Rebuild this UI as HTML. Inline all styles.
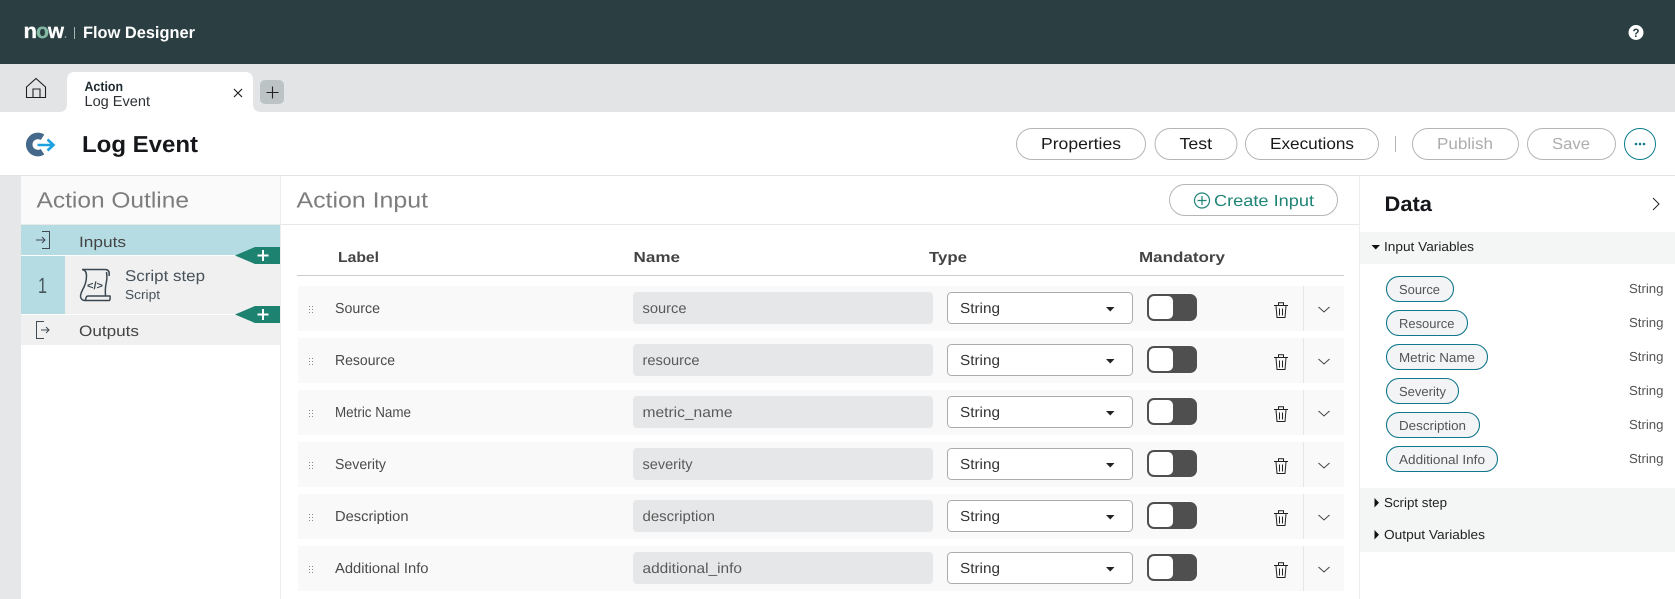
<!DOCTYPE html>
<html lang="en"><head><meta charset="utf-8"><title>Flow Designer</title>
<style>
html,body{margin:0;padding:0;background:#fff;width:1675px;height:599px;overflow:hidden}
svg{display:block}
text{font-family:"Liberation Sans",sans-serif;text-rendering:geometricPrecision;white-space:pre}
.b{font-weight:700}
.rl{font-size:14.5px;fill:#4a4a4a}
.nm{font-size:14.5px;fill:#5a5a5a}
.st{font-size:14.5px;fill:#333}
.pl{font-size:13px;fill:#555}
.ty{font-size:13px;fill:#555}
.hd{font-size:14.5px;font-weight:700;fill:#444}
.btn{font-size:16px;fill:#1a1a1a}
.ds{font-size:16px;fill:#adadad}
.sec{font-size:13px;fill:#222}
</style></head><body>
<svg xmlns="http://www.w3.org/2000/svg" width="1675" height="599" viewBox="0 0 1675 599">
<defs>
<g id="row">
<rect x="298" y="286" width="1046" height="45" fill="#f9f9f9"/>
<g fill="#888"><rect x="309" y="306" width="1" height="1"/><rect x="312" y="306" width="1" height="1"/><rect x="309" y="309" width="1" height="1"/><rect x="312" y="309" width="1" height="1"/><rect x="309" y="312" width="1" height="1"/><rect x="312" y="312" width="1" height="1"/></g>
<rect x="633" y="292" width="300" height="32" rx="4" fill="#e6e7e8"/>
<rect x="947.5" y="292.5" width="185" height="31" rx="4" fill="#fff" stroke="#ababab"/>
<path d="M1106 307h8.500l-4.250 4.500z" fill="#222"/>
<rect x="1147" y="294" width="50" height="27" rx="7" fill="#4f4f4f"/>
<rect x="1149" y="296" width="24" height="23" rx="5" fill="#fff"/>
<g fill="none" stroke="#222" stroke-width="1"><path d="M1274 305.500h14M1278.500 305v-2.300h5v2.300M1276 306l1 11.500h8l1-11.500M1279.500 308.500v7M1282.500 308.500v7"/></g>
<rect x="1303" y="286" width="1" height="45" fill="#e6e6e6"/>
<path d="M1318.500 307l5.500 5 5.500-5" fill="none" stroke="#444" stroke-width="1"/>
</g>
</defs>

<rect width="1675" height="64" fill="#2b3f43"/>
<text x="23.500" y="38" font-size="21" class="b" fill="#fff" stroke="#fff" stroke-width=".3" textLength="13.500" lengthAdjust="spacingAndGlyphs">n</text>
<text x="36" y="38" font-size="21" class="b" fill="#85b8a3" stroke="#85b8a3" stroke-width=".3" textLength="13" lengthAdjust="spacingAndGlyphs">o</text>
<text x="48" y="38" font-size="21" class="b" fill="#fff" stroke="#fff" stroke-width=".3" textLength="16" lengthAdjust="spacingAndGlyphs">w</text>
<circle cx="65.500" cy="37" r=".8" fill="#bbb"/>
<rect x="74" y="27" width="1" height="12" fill="#a9b2b4"/>
<text x="83" y="38" font-size="16.500" class="b" fill="#fff" textLength="112" lengthAdjust="spacingAndGlyphs">Flow Designer</text>
<circle cx="1636" cy="32.500" r="7.500" fill="#fff"/>
<text x="1632.500" y="37" font-size="12" class="b" fill="#2b3f43" textLength="7" lengthAdjust="spacingAndGlyphs">?</text>

<rect y="64" width="1675" height="48" fill="#e3e4e6"/>
<path d="M59 112q8 0 8-8V80q0-8 8-8h170q8 0 8 8v24q0 8 8 8z" fill="#fff"/>
<path d="M26.500 87L36 78.500 45.500 87v10.500h-19zM33 97.500v-8.500h7v8.500" fill="none" stroke="#222" stroke-width="1.100"/>
<text x="84.500" y="91" font-size="13.500" class="b" fill="#1f2a30" textLength="38.500" lengthAdjust="spacingAndGlyphs">Action</text>
<text x="84.500" y="106" font-size="14.500" fill="#2b2f33" textLength="65.500" lengthAdjust="spacingAndGlyphs">Log Event</text>
<path d="M234 89l8 8M242 89l-8 8" stroke="#222" stroke-width="1.200"/>
<rect x="260" y="80" width="24" height="24" rx="5" fill="#bcc3c5"/>
<path d="M272.500 86.500v12M266.500 92.500h12" stroke="#222" stroke-width="1.100"/>

<path d="M42.500 137.300A8.600 8.600 0 1 0 42.500 151.700" fill="none" stroke="#45698a" stroke-width="6.500"/>
<path d="M37.500 145h15M47.500 139.500l6 5.500-6 5.500" fill="none" stroke="#1da1e0" stroke-width="2.600"/>
<text x="82" y="152" font-size="23" class="b" fill="#16171a" textLength="116" lengthAdjust="spacingAndGlyphs">Log Event</text>

<g fill="#fff" stroke="#b5b5b5">
<rect x="1016.500" y="128.500" width="129" height="31" rx="15.500"/>
<rect x="1155" y="128.500" width="82" height="31" rx="15.500"/>
<rect x="1245.500" y="128.500" width="133" height="31" rx="15.500"/>
<rect x="1412.500" y="128.500" width="106" height="31" rx="15.500"/>
<rect x="1527.500" y="128.500" width="88" height="31" rx="15.500"/>
</g>
<text x="1041" y="149" class="btn" textLength="80" lengthAdjust="spacingAndGlyphs">Properties</text>
<text x="1179.500" y="149" class="btn" textLength="32.500" lengthAdjust="spacingAndGlyphs">Test</text>
<text x="1270" y="149" class="btn" textLength="84" lengthAdjust="spacingAndGlyphs">Executions</text>
<rect x="1395" y="136" width="1" height="16" fill="#b5b5b5"/>
<text x="1437" y="149" class="ds" textLength="56" lengthAdjust="spacingAndGlyphs">Publish</text>
<text x="1552" y="149" class="ds" textLength="38" lengthAdjust="spacingAndGlyphs">Save</text>
<circle cx="1640" cy="144" r="15.500" fill="#fff" stroke="#0e7a8c"/>
<g fill="#0e7a8c"><circle cx="1636" cy="144" r="1.300"/><circle cx="1640" cy="144" r="1.300"/><circle cx="1644" cy="144" r="1.300"/></g>

<rect y="175" width="1675" height="1" fill="#e3e3e3"/>
<rect y="176" width="21" height="423" fill="#e6e7e8"/>
<rect x="21" y="176" width="259" height="48" fill="#fafafa"/>
<rect x="280" y="176" width="1" height="423" fill="#eee"/>
<rect x="21" y="224" width="260" height="1" fill="#e8e8e8"/>
<text x="36.500" y="207.500" font-size="22" fill="#7d7d7d" textLength="152.500" lengthAdjust="spacingAndGlyphs">Action Outline</text>
<rect x="21" y="225" width="259" height="30" fill="#b5dce3"/>
<rect x="21" y="256" width="44" height="58" fill="#b5dce3"/>
<rect x="65" y="256" width="215" height="58" fill="#f0f0f0"/>
<rect x="21" y="315" width="259" height="30" fill="#f0f0f0"/>
<path d="M42 231.500h7.500v17H42M36 240h9M42 237l3 3-3 3" fill="none" stroke="#3f4a52" stroke-width="1"/>
<path d="M44 321.500h-7.500v17H44M41 330h8M46 327l3 3-3 3" fill="none" stroke="#3f4a52" stroke-width="1"/>
<text x="79" y="247" font-size="15" fill="#444" textLength="47" lengthAdjust="spacingAndGlyphs">Inputs</text>
<text x="79" y="336" font-size="15" fill="#444" textLength="60" lengthAdjust="spacingAndGlyphs">Outputs</text>
<text x="38" y="293" font-size="22" fill="#45565c" textLength="9" lengthAdjust="spacingAndGlyphs">1</text>
<path d="M82 269.500H105q4 0 4.300 4l-.3 2.500M82 269.500q4.500 .5 4.500 6.500 0 7-4 14-3 6-1.500 8 1 2.500 4 2.500h24q1.500 0 1-4.500H88q-2 0-2.500 4M106.500 272q1 6-.5 12-1 5-.5 11.500" fill="none" stroke="#3a4750" stroke-width="1.500" stroke-linejoin="round"/>
<text x="87" y="289" font-size="10.500" class="b" fill="#3a4750" textLength="16" lengthAdjust="spacingAndGlyphs">&lt;/&gt;</text>
<text x="125" y="281" font-size="15.500" fill="#48525a" textLength="80" lengthAdjust="spacingAndGlyphs">Script step</text>
<text x="125" y="299" font-size="13" fill="#48525a" textLength="35" lengthAdjust="spacingAndGlyphs">Script</text>
<path d="M235 255.500l20-8.500h25v17h-25z" fill="#1e8270"/>
<path d="M263 250v11M257.500 255.500h11" stroke="#fff" stroke-width="2"/>
<path d="M235 314.500l20-8.500h25v17h-25z" fill="#1e8270"/>
<path d="M263 309v11M257.500 314.500h11" stroke="#fff" stroke-width="2"/>

<rect x="281" y="224" width="1078" height="1" fill="#e8e8e8"/>
<text x="296.500" y="207.500" font-size="22" fill="#7d7d7d" textLength="131.500" lengthAdjust="spacingAndGlyphs">Action Input</text>
<rect x="1169.500" y="184.500" width="168" height="31" rx="15.500" fill="#fff" stroke="#b5b5b5"/>
<circle cx="1202" cy="200.500" r="7.500" fill="none" stroke="#1f8476" stroke-width="1.200"/>
<path d="M1202 196v9M1197.500 200.500h9" stroke="#1f8476" stroke-width="1.200"/>
<text x="1214" y="206" font-size="16" fill="#1f8476" textLength="100" lengthAdjust="spacingAndGlyphs">Create Input</text>

<text x="338" y="262" class="hd" textLength="41" lengthAdjust="spacingAndGlyphs">Label</text>
<text x="633.500" y="262" class="hd" textLength="46.500" lengthAdjust="spacingAndGlyphs">Name</text>
<text x="929" y="262" class="hd" textLength="38" lengthAdjust="spacingAndGlyphs">Type</text>
<text x="1139" y="262" class="hd" textLength="86" lengthAdjust="spacingAndGlyphs">Mandatory</text>
<rect x="297" y="275" width="1047" height="1" fill="#ccc"/>

<use href="#row"/>
<use href="#row" y="52"/>
<use href="#row" y="104"/>
<use href="#row" y="156"/>
<use href="#row" y="208"/>
<use href="#row" y="260"/>

<text x="335" y="313" class="rl" textLength="45" lengthAdjust="spacingAndGlyphs">Source</text>
<text x="335" y="365" class="rl" textLength="60" lengthAdjust="spacingAndGlyphs">Resource</text>
<text x="335" y="417" class="rl" textLength="76" lengthAdjust="spacingAndGlyphs">Metric Name</text>
<text x="335" y="469" class="rl" textLength="51" lengthAdjust="spacingAndGlyphs">Severity</text>
<text x="335" y="521" class="rl" textLength="73.500" lengthAdjust="spacingAndGlyphs">Description</text>
<text x="335" y="573" class="rl" textLength="93.500" lengthAdjust="spacingAndGlyphs">Additional Info</text>

<text x="642.500" y="313" class="nm" textLength="44" lengthAdjust="spacingAndGlyphs">source</text>
<text x="642.500" y="365" class="nm" textLength="57" lengthAdjust="spacingAndGlyphs">resource</text>
<text x="642.500" y="417" class="nm" textLength="90" lengthAdjust="spacingAndGlyphs">metric_name</text>
<text x="642.500" y="469" class="nm" textLength="50" lengthAdjust="spacingAndGlyphs">severity</text>
<text x="642.500" y="521" class="nm" textLength="72.500" lengthAdjust="spacingAndGlyphs">description</text>
<text x="642.500" y="573" class="nm" textLength="99.500" lengthAdjust="spacingAndGlyphs">additional_info</text>

<text x="960" y="313" class="st" textLength="40" lengthAdjust="spacingAndGlyphs">String</text>
<text x="960" y="365" class="st" textLength="40" lengthAdjust="spacingAndGlyphs">String</text>
<text x="960" y="417" class="st" textLength="40" lengthAdjust="spacingAndGlyphs">String</text>
<text x="960" y="469" class="st" textLength="40" lengthAdjust="spacingAndGlyphs">String</text>
<text x="960" y="521" class="st" textLength="40" lengthAdjust="spacingAndGlyphs">String</text>
<text x="960" y="573" class="st" textLength="40" lengthAdjust="spacingAndGlyphs">String</text>

<rect x="1359" y="176" width="1" height="423" fill="#eee"/>
<text x="1384.500" y="211" font-size="21" class="b" fill="#16171a" textLength="47.500" lengthAdjust="spacingAndGlyphs">Data</text>
<path d="M1653 198l6 6-6 6" fill="none" stroke="#222" stroke-width="1"/>
<rect x="1360" y="232" width="315" height="32" fill="#f4f5f5"/>
<path d="M1371.500 245h8.500l-4.250 4.500z" fill="#111"/>
<text x="1384" y="251" class="sec" textLength="90" lengthAdjust="spacingAndGlyphs">Input Variables</text>

<g fill="#f3f4f5" stroke="#10788c" stroke-width="1.100">
<rect x="1386.500" y="276.500" width="67" height="25" rx="12.500"/>
<rect x="1386.500" y="310.500" width="81" height="25" rx="12.500"/>
<rect x="1386.500" y="344.500" width="101" height="25" rx="12.500"/>
<rect x="1386.500" y="378.500" width="72" height="25" rx="12.500"/>
<rect x="1386.500" y="412.500" width="93" height="25" rx="12.500"/>
<rect x="1386.500" y="446.500" width="111" height="25" rx="12.500"/>
</g>
<text x="1399" y="294" class="pl" textLength="41" lengthAdjust="spacingAndGlyphs">Source</text>
<text x="1399" y="328" class="pl" textLength="55.500" lengthAdjust="spacingAndGlyphs">Resource</text>
<text x="1399" y="362" class="pl" textLength="76" lengthAdjust="spacingAndGlyphs">Metric Name</text>
<text x="1399" y="396" class="pl" textLength="47" lengthAdjust="spacingAndGlyphs">Severity</text>
<text x="1399" y="430" class="pl" textLength="67" lengthAdjust="spacingAndGlyphs">Description</text>
<text x="1399" y="464" class="pl" textLength="86" lengthAdjust="spacingAndGlyphs">Additional Info</text>
<text x="1629" y="293" class="ty" textLength="34.500" lengthAdjust="spacingAndGlyphs">String</text>
<text x="1629" y="327" class="ty" textLength="34.500" lengthAdjust="spacingAndGlyphs">String</text>
<text x="1629" y="361" class="ty" textLength="34.500" lengthAdjust="spacingAndGlyphs">String</text>
<text x="1629" y="395" class="ty" textLength="34.500" lengthAdjust="spacingAndGlyphs">String</text>
<text x="1629" y="429" class="ty" textLength="34.500" lengthAdjust="spacingAndGlyphs">String</text>
<text x="1629" y="463" class="ty" textLength="34.500" lengthAdjust="spacingAndGlyphs">String</text>

<rect x="1360" y="488" width="315" height="64" fill="#f4f5f5"/>
<path d="M1374.500 498v9.500l4.500-4.750z" fill="#111"/>
<text x="1384" y="507" class="sec" textLength="63" lengthAdjust="spacingAndGlyphs">Script step</text>
<path d="M1374.500 530v9.500l4.500-4.750z" fill="#111"/>
<text x="1384" y="539" class="sec" textLength="101" lengthAdjust="spacingAndGlyphs">Output Variables</text>
</svg>
</body></html>
